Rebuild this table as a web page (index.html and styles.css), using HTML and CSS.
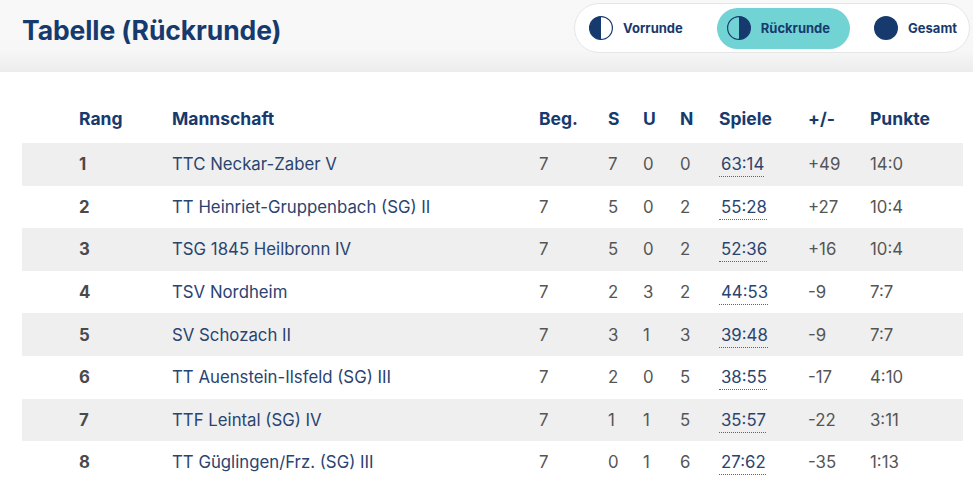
FILE: index.html
```html
<!DOCTYPE html>
<html lang="de">
<head>
<meta charset="utf-8">
<title>Tabelle (Rückrunde)</title>
<link rel="stylesheet" href="styles.css">
</head>
<body>
<header class="head">
  <h1 class="title">Tabelle (Rückrunde)</h1>
  <nav class="toggle">
    <a class="tog">
      <svg class="ico" viewBox="0 0 24 24"><circle cx="12" cy="12" r="11.4" fill="none" stroke="#173a6e" stroke-width="1.2"/><path d="M12 0.6 A11.4 11.4 0 0 0 12 23.4 Z" fill="#173a6e"/></svg>
      <span>Vorrunde</span>
    </a>
    <a class="tog active">
      <svg class="ico" viewBox="0 0 24 24"><circle cx="12" cy="12" r="11.4" fill="none" stroke="#173a6e" stroke-width="1.2"/><path d="M12 0.6 A11.4 11.4 0 0 1 12 23.4 Z" fill="#173a6e"/></svg>
      <span>Rückrunde</span>
    </a>
    <a class="tog last">
      <svg class="ico" viewBox="0 0 24 24"><circle cx="12" cy="12" r="12" fill="#173a6e"/></svg>
      <span>Gesamt</span>
    </a>
  </nav>
</header>
<main class="content">
  <table class="tbl">
    <colgroup>
      <col class="c-rang"><col class="c-team"><col class="c-beg"><col class="c-s"><col class="c-u"><col class="c-n"><col class="c-sp"><col class="c-diff"><col class="c-pkt">
    </colgroup>
    <thead>
      <tr><th class="rang">Rang</th><th>Mannschaft</th><th>Beg.</th><th>S</th><th>U</th><th>N</th><th>Spiele</th><th>+/-</th><th>Punkte</th></tr>
    </thead>
    <tbody>
      <tr><td class="rang">1</td><td class="team">TTC Neckar-Zaber V</td><td>7</td><td>7</td><td>0</td><td>0</td><td><a class="sp">63:14</a></td><td>+49</td><td>14:0</td></tr>
      <tr><td class="rang">2</td><td class="team">TT Heinriet-Gruppenbach (SG) II</td><td>7</td><td>5</td><td>0</td><td>2</td><td><a class="sp">55:28</a></td><td>+27</td><td>10:4</td></tr>
      <tr><td class="rang">3</td><td class="team">TSG 1845 Heilbronn IV</td><td>7</td><td>5</td><td>0</td><td>2</td><td><a class="sp">52:36</a></td><td>+16</td><td>10:4</td></tr>
      <tr><td class="rang">4</td><td class="team">TSV Nordheim</td><td>7</td><td>2</td><td>3</td><td>2</td><td><a class="sp">44:53</a></td><td>-9</td><td>7:7</td></tr>
      <tr><td class="rang">5</td><td class="team">SV Schozach II</td><td>7</td><td>3</td><td>1</td><td>3</td><td><a class="sp">39:48</a></td><td>-9</td><td>7:7</td></tr>
      <tr><td class="rang">6</td><td class="team">TT Auenstein-Ilsfeld (SG) III</td><td>7</td><td>2</td><td>0</td><td>5</td><td><a class="sp">38:55</a></td><td>-17</td><td>4:10</td></tr>
      <tr><td class="rang">7</td><td class="team">TTF Leintal (SG) IV</td><td>7</td><td>1</td><td>1</td><td>5</td><td><a class="sp">35:57</a></td><td>-22</td><td>3:11</td></tr>
      <tr><td class="rang">8</td><td class="team">TT Güglingen/Frz. (SG) III</td><td>7</td><td>0</td><td>1</td><td>6</td><td><a class="sp">27:62</a></td><td>-35</td><td>1:13</td></tr>
    </tbody>
  </table>
</main>
</body>
</html>
```
FILE: styles.css
```css
* { box-sizing: border-box; }
html, body { margin: 0; padding: 0; background: #fff; }
body { font-family: Inter, "Noto Sans", "Liberation Sans", sans-serif; color: #555; }

.head {
  height: 72px;
  display: flex;
  align-items: flex-start;
  justify-content: space-between;
  padding: 3px 3px 0 22px;
  background: linear-gradient(to bottom, #f8f8f8 0%, #f7f7f7 70%, #ececec 100%);
}
.title {
  margin: 12px 0 0 0;
  font-size: 26.5px;
  font-weight: 700;
  color: #173a6e;
  letter-spacing: -0.1px;
  line-height: 30px;
}
.toggle {
  display: flex;
  align-items: center;
  gap: 14px;
  height: 50px;
  padding: 4px 0 4px 4px;
  background: #fff;
  border: 1px solid #e6e6e6;
  border-radius: 25px;
}
.tog {
  display: flex;
  align-items: center;
  gap: 10px;
  height: 41px;
  padding: 0 20px 0 10px;
  border-radius: 21px;
  font-size: 13px;
  font-weight: 700;
  color: #173a6e;
}
.tog.active { background: #72d3d4; }
.tog.last { padding-right: 12px; }
.ico { width: 24px; height: 24px; display: block; }

.content { padding: 24px 10px 0 22px; }
.tbl {
  width: 941px;
  table-layout: fixed;
  border-collapse: collapse;
  font-size: 16.8px;
}
.c-rang { width: 150px; }
.c-team { width: 367px; }
.c-beg { width: 69px; }
.c-s { width: 35px; }
.c-u { width: 37px; }
.c-n { width: 39px; }
.c-sp { width: 89px; }
.c-diff { width: 62px; }
.c-pkt { width: 93px; }

.tbl th {
  text-align: left;
  font-weight: 700;
  font-size: 17.5px;
  color: #173a6e;
  height: 47px;
  padding: 0 0 2px 0;
  vertical-align: middle;
}
.tbl td {
  padding: 0;
  height: 42.6px;
  vertical-align: middle;
  color: #555;
}
.tbl .rang { padding-left: 57px; }
.tbl td.rang { font-weight: 700; color: #4a4a4a; }
.tbl td.team { color: #2a4470; }
.tbl tbody tr:nth-child(odd) { background: #efefef; }
.sp {
  color: #2a4470;
  padding-left: 2px;
  padding-bottom: 2px;
  border-bottom: 1px dotted #3a6aa8;
}
```
